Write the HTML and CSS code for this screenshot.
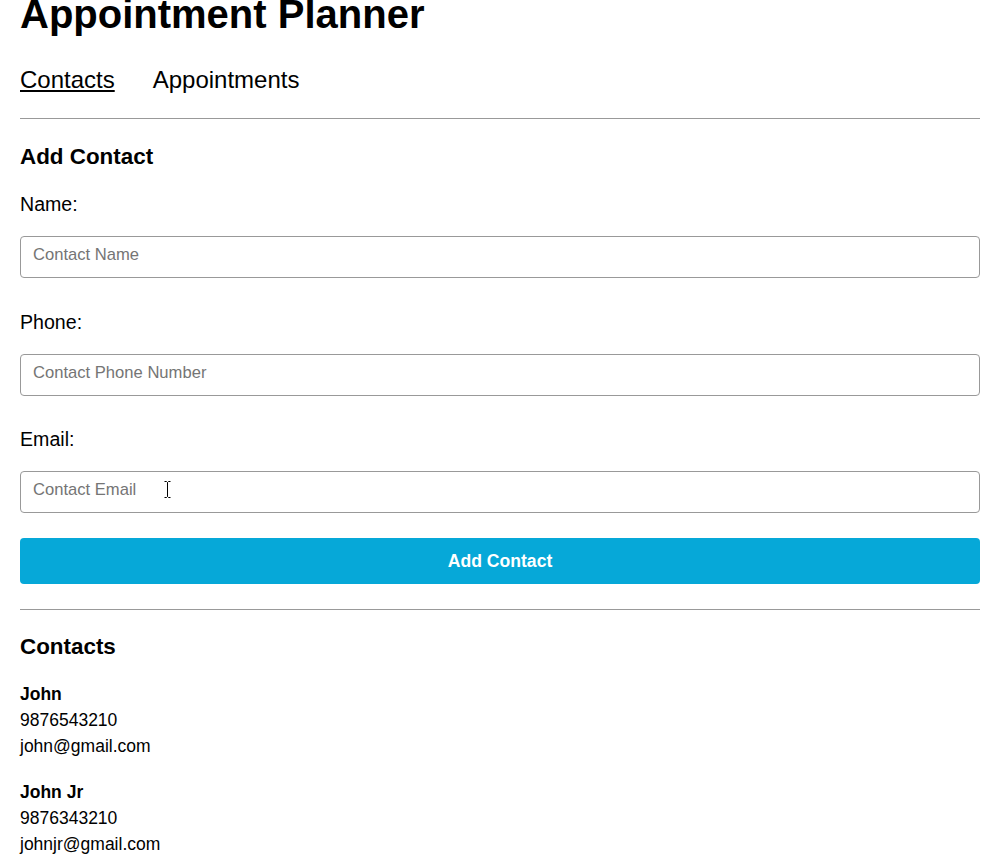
FILE: index.html
```html
<!DOCTYPE html>
<html lang="en">
<head>
<meta charset="utf-8">
<title>Appointment Planner</title>
<link rel="stylesheet" href="styles.css">
</head>
<body>
<div class="page">
  <h1 class="title">Appointment Planner</h1>
  <nav class="nav">
    <a class="nav-link active" href="#">Contacts</a>
    <a class="nav-link" href="#">Appointments</a>
  </nav>
  <hr class="rule">
  <section class="add-section">
    <h3 class="section-title">Add Contact</h3>
    <form class="contact-form">
      <div class="field">
        <label class="field-label" for="name">Name:</label>
        <input class="field-input" id="name" type="text" placeholder="Contact Name">
      </div>
      <div class="field">
        <label class="field-label" for="phone">Phone:</label>
        <input class="field-input" id="phone" type="text" placeholder="Contact Phone Number">
      </div>
      <div class="field last">
        <label class="field-label" for="email">Email:</label>
        <div class="input-wrap">
          <input class="field-input" id="email" type="text" placeholder="Contact Email">
          <svg class="cursor" width="7" height="17" viewBox="0 0 7 17"><path d="M0.5 0.5h2l1 1 1-1h2M3.5 1.5v14M0.5 16.5h2l1-1 1 1h2" fill="none" stroke="#000" stroke-width="1"/></svg>
        </div>
      </div>
      <button class="submit-btn" type="button">Add Contact</button>
    </form>
  </section>
  <hr class="rule rule-lower">
  <section class="list-section">
    <h3 class="section-title">Contacts</h3>
    <div class="contact">
      <div class="contact-name">John</div>
      <div>9876543210</div>
      <div>john@gmail.com</div>
    </div>
    <div class="contact">
      <div class="contact-name">John Jr</div>
      <div>9876343210</div>
      <div>johnjr@gmail.com</div>
    </div>
  </section>
</div>
</body>
</html>
```

FILE: styles.css
```css
html, body {
  margin: 0;
  padding: 0;
  background: #fff;
}

body {
  font-family: "Liberation Sans", Arial, sans-serif;
  color: #000;
  overflow: hidden;
}

.page {
  width: 960px;
  margin-left: 20px;
}

.title {
  font-size: 40px;
  line-height: 48px;
  font-weight: 700;
  margin: -10px 0 0;
}

.nav {
  display: flex;
  gap: 38px;
  margin-top: 27px;
  font-size: 24px;
  line-height: 30px;
}

.nav-link {
  color: #000;
  text-decoration: none;
}

.nav-link.active {
  text-decoration: underline;
}

.rule {
  height: 0;
  margin: 23px 0 0;
  border: 0;
  border-top: 1px solid #999;
}

.rule-lower {
  margin-top: 25px;
}

.section-title {
  font-size: 22.4px;
  line-height: 26px;
  font-weight: 700;
  margin: 25px 0 0;
}

.list-section .section-title {
  margin-top: 24px;
}

.contact-form {
  display: flex;
  flex-direction: column;
  margin-top: 22px;
}

.field {
  display: flex;
  flex-direction: column;
  margin-bottom: 31.5px;
}

.field.last {
  margin-bottom: 25px;
}

.field-label {
  font-size: 19.6px;
  line-height: 24px;
  margin-bottom: 20px;
}

.input-wrap {
  position: relative;
}

.field-input {
  display: block;
  box-sizing: border-box;
  width: 100%;
  height: 42px;
  margin: 0;
  padding: 8px 12px 12px;
  border: 1px solid #999;
  border-radius: 4px;
  font-family: "Liberation Sans", Arial, sans-serif;
  font-size: 16.6px;
  line-height: 20px;
  color: #000;
  background: #fff;
  outline: none;
}

.field-input::placeholder {
  color: #757575;
}

.cursor {
  position: absolute;
  left: 144px;
  top: 10px;
}

.submit-btn {
  height: 46px;
  border: 0;
  border-radius: 4px;
  background: #06a8d8;
  color: #fff;
  font-family: "Liberation Sans", Arial, sans-serif;
  font-size: 17.6px;
  font-weight: 700;
  cursor: pointer;
}

.list-section {
  font-size: 17.5px;
  line-height: 26px;
}

.contact {
  margin-top: 21px;
}

.contact + .contact {
  margin-top: 20px;
}

.contact-name {
  font-weight: 700;
}
```
